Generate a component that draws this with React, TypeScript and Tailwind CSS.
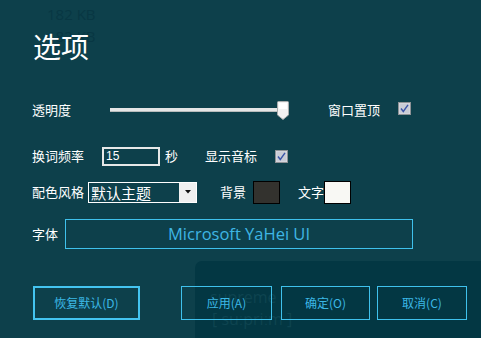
import React from "react";

const CJK = { fontFamily: '"Noto Sans CJK SC", "Noto Sans", sans-serif' };

function Check() {
  return (
    <svg width="13" height="13" viewBox="0 0 13 13" className="shrink-0">
      <rect x="0.5" y="0.5" width="12" height="12" fill="#dcdde2" stroke="#8e9296" />
      <rect x="1.5" y="1.5" width="10" height="10" fill="#c9ccd6" />
      <path d="M3 6.5 L5.3 9.5 L10 2.8" fill="none" stroke="#3b55a8" strokeWidth="1.4" />
    </svg>
  );
}

function Slider() {
  return (
    <div className="relative w-[180px] h-[20px] flex items-center">
      <div className="w-[178px] h-[4px] bg-[#e4e6e6] border-b border-[#b8bcbc]" />
      <svg width="12" height="19" viewBox="0 0 12 19" className="absolute left-[167px] top-[1px]">
        <path d="M0.5 1.5 Q0.5 0.5 1.5 0.5 L10.5 0.5 Q11.5 0.5 11.5 1.5 L11.5 14 L6 18.5 L0.5 14 Z" fill="#f2f2f2" stroke="#a8acac" />
        <rect x="2" y="2" width="8" height="6" fill="#ffffff" />
      </svg>
    </div>
  );
}

export default function App() {
  const lbl = "text-[13px] leading-[20px] text-white shrink-0";
  const ghost = { fontFamily: '"Open Sans", sans-serif' };
  return (
    <div className="relative w-[481px] h-[338px] overflow-hidden bg-[#0d404b]" style={CJK}>
      {/* ghost overlays */}
      <div className="absolute left-[47px] top-[4px] text-[15px] leading-[20px] text-[#083743]" style={ghost}>182 KB</div>
      <div className="absolute left-[47px] top-[26px] text-[15px] leading-[20px] text-[#083743]" style={ghost}>182 KB</div>
      <div className="absolute left-[195px] top-[261px] w-[300px] h-[90px] rounded-tl-[7px] bg-[#033743]" />
      <div className="absolute left-[210px] top-[287px] text-[16px] leading-[20px] text-[#0e4450]" style={ghost}>supreme</div>
      <div className="absolute left-[212px] top-[309px] text-[16px] leading-[20px] text-[#0e4450]" style={ghost}>[ suːpriːm ]</div>

      <div className="relative flex flex-col pl-[32px]">
        <div className="mt-[28px] text-[28px] leading-[36px] text-white pl-[1px]">选项</div>

        {/* row 1 */}
        <div className="mt-[36px] h-[20px] flex items-center">
          <div className={lbl + " w-[78px]"}>透明度</div>
          <Slider />
          <div className={lbl + " ml-[38px] w-[52px]"}>窗口置顶</div>
          <div className="ml-[18px] mt-[-4px]"><Check /></div>
        </div>

        {/* row 2 */}
        <div className="mt-[26px] h-[20px] flex items-center">
          <div className={lbl + " w-[70px]"}>换词频率</div>
          <div className="w-[58px] h-[19px] border-2 border-[#e6e8e8] bg-[#0d404b] flex items-center pl-[2px] text-[12px] text-white" style={{ fontFamily: '"Liberation Sans", sans-serif' }}>15</div>
          <div className={lbl + " ml-[5px] w-[13px]"}>秒</div>
          <div className={lbl + " ml-[27px] w-[52px]"}>显示音标</div>
          <div className="ml-[18px]"><Check /></div>
        </div>

        {/* row 3 */}
        <div className="mt-[15px] h-[22px] flex items-center">
          <div className={lbl + " w-[56px]"}>配色风格</div>
          <div className="w-[109px] h-[21px] border border-white flex items-stretch">
            <div className="flex-1 pl-[2px] text-[15px] leading-[19px] text-white">默认主题</div>
            <div className="w-[17px] bg-[#f0f0f0] flex items-center justify-center">
              <svg width="6" height="4" viewBox="0 0 6 4"><path d="M0 0 L6 0 L3 3.5 Z" fill="#111" /></svg>
            </div>
          </div>
          <div className={lbl + " ml-[23px] w-[26px]"}>背景</div>
          <div className="ml-[7px] w-[27px] h-[23px] bg-[#33322e] border border-black" />
          <div className={lbl + " ml-[18px] w-[26px]"}>文字</div>
          <div className="w-[27px] h-[23px] bg-[#f8f8f4] border border-black" />
        </div>

        {/* row 4 */}
        <div className="mt-[16px] h-[30px] flex items-center">
          <div className={lbl + " w-[33px]"}>字体</div>
          <div className="w-[348px] h-[30px] border border-[#3fc1ec] flex items-center justify-center text-[16.5px] text-[#3fb6e4]" style={{ fontFamily: '"Open Sans", sans-serif' }}>Microsoft YaHei UI</div>
        </div>

        {/* buttons */}
        <div className="mt-[37px] h-[34px] flex items-center text-[12px] text-[#3cb8e6]">
          <div className="ml-[1px] w-[107px] h-[34px] border-2 border-[#44c4f0] flex items-center justify-center">恢复默认(D)</div>
          <div className="ml-[41px] w-[91px] h-[34px] border border-[#3fc1ec] flex items-center justify-center">应用(A)</div>
          <div className="ml-[9px] w-[89px] h-[34px] border border-[#3fc1ec] flex items-center justify-center">确定(O)</div>
          <div className="ml-[7px] w-[90px] h-[34px] border border-[#3fc1ec] flex items-center justify-center">取消(C)</div>
        </div>
      </div>
    </div>
  );
}
